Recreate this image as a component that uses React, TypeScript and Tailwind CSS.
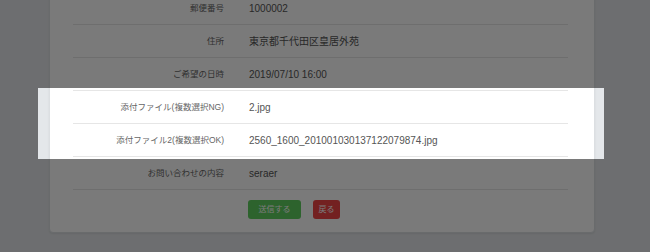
const ROWS = [
    { label: '郵便番号', value: '1000002' },
    { label: '住所', value: '東京都千代田区皇居外苑' },
    { label: 'ご希望の日時', value: '2019/07/10 16:00' },
    { label: '添付ファイル(複数選択NG)', value: '2.jpg' },
    { label: '添付ファイル2(複数選択OK)', value: '2560_1600_201001030137122079874.jpg' },
    { label: 'お問い合わせの内容', value: 'seraer' },
];

export default function App() {
    return (
        <div
            className="relative h-[252px] w-[650px] overflow-hidden bg-[#e4e7ea]"
            style={{ fontFamily: '"Liberation Sans", "Noto Sans CJK JP", sans-serif' }}
        >
            <div className="ml-[49px] -mt-[9px] w-[546px] rounded-[4px] border border-[#dcdfe2] bg-white pl-[23px] pr-[26px] shadow-[0_1px_2px_rgba(0,0,0,0.08)]">
                {ROWS.map((row) => (
                    <div key={row.label} className="flex h-[33px] items-center border-b border-[#e6e6e6]">
                        <div className="w-[151px] shrink-0 text-right text-[8.5px] text-[#666]">{row.label}</div>
                        <div className="pl-[25px] text-[10px] text-[#555]">{row.value}</div>
                    </div>
                ))}
                <div className="flex gap-[12px] pb-[13px] pl-[175px] pt-[10px]">
                    <button className="flex h-[19px] w-[53px] items-center justify-center rounded-[3px] bg-[#5fcf5f] text-[8px] text-white">
                        送信する
                    </button>
                    <button className="flex h-[19px] w-[27px] items-center justify-center rounded-[3px] bg-[#f04646] text-[8px] text-white">
                        戻る
                    </button>
                </div>
            </div>

            {/* spotlight over the attachment rows */}
            <div className="pointer-events-none absolute left-[38px] top-[88px] h-[71px] w-[566px] shadow-[0_0_0_9999px_rgba(0,0,0,0.52)]" />
        </div>
    );
}
